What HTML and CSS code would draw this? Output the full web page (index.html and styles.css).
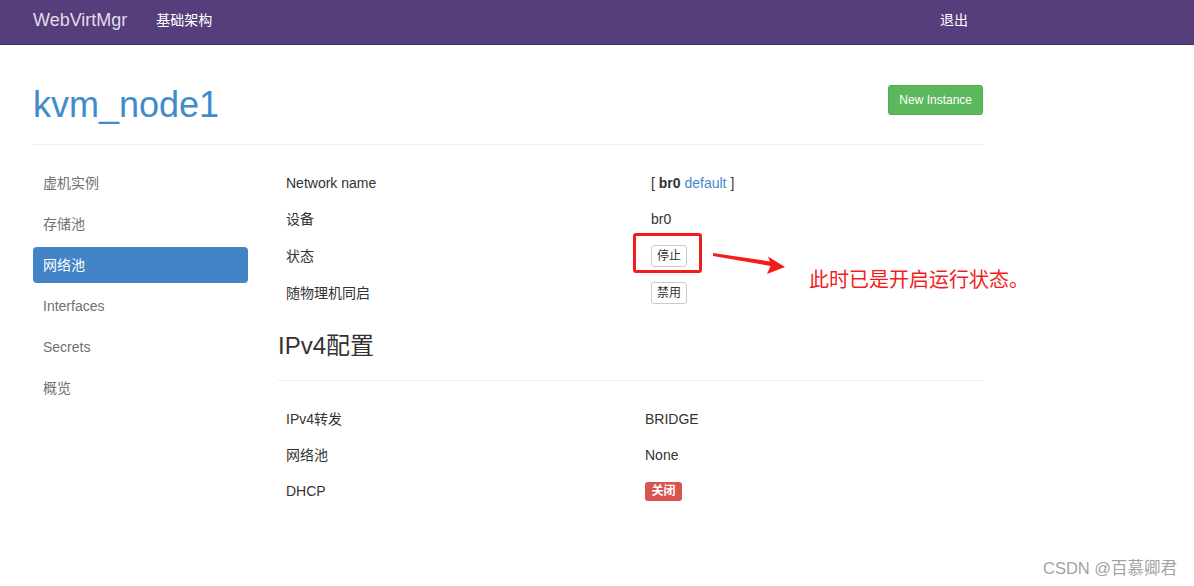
FILE: index.html
```html
<!DOCTYPE html>
<html lang="zh-CN">
<head>
<meta charset="utf-8">
<title>WebVirtMgr</title>
<link rel="stylesheet" href="styles.css">
</head>
<body>
<nav class="navbar">
  <div class="nav-inner">
    <a class="brand">WebVirtMgr</a>
    <a class="nav-link">基础架构</a>
    <a class="nav-link nav-right">退出</a>
  </div>
</nav>

<div class="container">
  <div class="page-header">
    <h1>kvm_node1</h1>
    <a class="btn btn-success">New Instance</a>
  </div>

  <div class="row">
    <ul class="side-nav">
      <li><a>虚机实例</a></li>
      <li><a>存储池</a></li>
      <li class="active"><a>网络池</a></li>
      <li><a>Interfaces</a></li>
      <li><a>Secrets</a></li>
      <li><a>概览</a></li>
    </ul>

    <div class="main">
      <div class="table t1">
        <div class="tr h36"><div class="td">Network name</div><div class="td">[ <b>br0</b> <a class="link">default</a> ]</div></div>
        <div class="tr h36"><div class="td">设备</div><div class="td">br0</div></div>
        <div class="tr h37"><div class="td">状态</div><div class="td"><button class="btn-xs">停止</button></div></div>
        <div class="tr h38"><div class="td">随物理机同启</div><div class="td"><button class="btn-xs">禁用</button></div></div>
      </div>

      <h3 class="section">IPv4配置</h3>

      <div class="table t2">
        <div class="tr h36"><div class="td">IPv4转发</div><div class="td">BRIDGE</div></div>
        <div class="tr h36"><div class="td">网络池</div><div class="td">None</div></div>
        <div class="tr h36"><div class="td">DHCP</div><div class="td"><span class="label-danger">关闭</span></div></div>
      </div>
    </div>
  </div>
</div>

<div class="mark-box"></div>
<svg class="mark-arrow" width="1194" height="586" viewBox="0 0 1194 586">
  <polygon points="713,253 770,261.5 768,256.5 785,267 767,274 770.5,266 713,256" fill="#f21c1c"/>
</svg>
<div class="mark-text">此时已是开启运行状态。</div>
<div class="watermark">CSDN @百慕卿君</div>
</body>
</html>
```

FILE: styles.css
```css
html, body {
  margin: 0;
  padding: 0;
}
body {
  font-family: "Liberation Sans", "Noto Sans CJK SC", sans-serif;
  font-size: 14px;
  line-height: 20px;
  color: #333;
  background: #fff;
  position: relative;
  width: 1194px;
  height: 586px;
  overflow: hidden;
}
a { text-decoration: none; }

.navbar {
  height: 45px;
  box-sizing: border-box;
  background: #563d7c;
  border-bottom: 1px solid #463168;
}
.nav-inner {
  display: flex;
  align-items: center;
  height: 39px;
  padding-left: 33px;
  width: 950px;
}
.brand {
  font-size: 18px;
  color: #e2dcea;
  margin-right: 29px;
}
.nav-link {
  font-size: 14px;
  color: #fff;
}
.nav-right {
  margin-left: auto;
  margin-right: 15px;
}

.container {
  width: 950px;
  margin-left: 33px;
  padding-top: 40px;
}
.page-header {
  display: flex;
  justify-content: space-between;
  align-items: flex-start;
  padding-bottom: 19px;
  border-bottom: 1px solid #eee;
}
.page-header h1 {
  margin: 0;
  font-size: 36px;
  line-height: 40px;
  font-weight: normal;
  color: #428bca;
}
.btn {
  display: inline-block;
  font-size: 12px;
  line-height: 18px;
  padding: 5px 10px;
  border-radius: 3px;
  border: 1px solid transparent;
}
.btn-success {
  background: #5cb85c;
  border-color: #4cae4c;
  color: #fff;
}

.row {
  display: flex;
  gap: 30px;
  margin-top: 20px;
}
.side-nav {
  list-style: none;
  margin: 0;
  padding: 0;
  width: 215px;
  flex: none;
}
.side-nav li {
  margin-bottom: 5px;
}
.side-nav li a {
  display: block;
  height: 36px;
  line-height: 36px;
  padding: 0 10px;
  color: #707070;
  border-radius: 4px;
}
.side-nav li.active a {
  background: #4284c6;
  color: #fff;
}

.main {
  flex: 1;
}
.table .tr {
  display: grid;
  align-items: center;
}
.t1 .tr { grid-template-columns: 365px 1fr; }
.t2 .tr { grid-template-columns: 359px 1fr; }
.td {
  padding: 0 8px;
}
.h36 { height: 36px; }
.h37 { height: 37px; }
.h38 { height: 38px; }
.link { color: #428bca; }

.btn-xs {
  font-family: "Liberation Sans", "Noto Sans CJK SC", sans-serif;
  font-size: 12px;
  line-height: 18px;
  padding: 1px 5px;
  background: #fff;
  color: #333;
  border: 1px solid #ccc;
  border-radius: 3px;
  display: inline-block;
  vertical-align: middle;
}

.section {
  margin: 21px 0 20px;
  padding-bottom: 21px;
  border-bottom: 1px solid #eee;
  font-size: 24px;
  line-height: 26px;
  font-weight: normal;
  color: #333;
}

.label-danger {
  display: inline-block;
  background: #d9534f;
  color: #fff;
  font-size: 12px;
  font-weight: bold;
  height: 19px;
  line-height: 19px;
  padding: 0 6.5px;
  border-radius: 3px;
  vertical-align: middle;
}

.mark-box {
  position: absolute;
  left: 633px;
  top: 233px;
  width: 63px;
  height: 34px;
  border: 3px solid #f21c1c;
  border-radius: 3px;
}
.mark-arrow {
  position: absolute;
  left: 0;
  top: 0;
  pointer-events: none;
}
.mark-text {
  position: absolute;
  left: 809px;
  top: 268px;
  font-size: 20px;
  line-height: 24px;
  color: #f21c1c;
}
.watermark {
  position: absolute;
  left: 1043px;
  top: 557px;
  font-size: 16.5px;
  line-height: 22px;
  color: #a3a3a3;
}
```
